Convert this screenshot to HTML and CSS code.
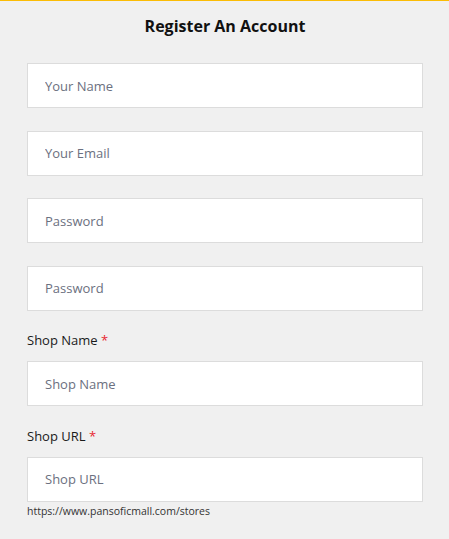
FILE: index.html
```html
<!DOCTYPE html>
<html lang="en">
<head>
<meta charset="utf-8">
<title>Register An Account</title>
<link rel="stylesheet" href="styles.css">
</head>
<body>
<main class="page">
  <h1 class="title">Register An Account</h1>
  <form class="form">
    <div class="field"><input class="input" type="text" placeholder="Your Name"></div>
    <div class="field"><input class="input" type="email" placeholder="Your Email"></div>
    <div class="field"><input class="input" type="password" placeholder="Password"></div>
    <div class="field"><input class="input" type="password" placeholder="Password"></div>
    <div class="field">
      <label class="label">Shop Name <span class="req">*</span></label>
      <input class="input" type="text" placeholder="Shop Name">
    </div>
    <div class="field">
      <label class="label">Shop URL <span class="req">*</span></label>
      <input class="input" type="text" placeholder="Shop URL">
      <p class="hint">https://www.pansoficmall.com/stores</p>
    </div>
  </form>
</main>
</body>
</html>
```

FILE: styles.css
```css
html, body {
  margin: 0;
  padding: 0;
  background: #f0f0f0;
}
body {
  border-top: 1px solid #fbbc05;
  font-family: "Open Sans", "Liberation Sans", sans-serif;
  color: #111;
  min-height: 538px;
}
.page {
  padding: 15px 26px 0 27px;
}
.title {
  margin: 0;
  font-size: 16px;
  line-height: 20px;
  font-weight: 700;
  text-align: center;
  color: #111;
}
.form {
  margin-top: 27px;
  display: flex;
  flex-direction: column;
  gap: 22.5px;
}
.field {
  display: flex;
  flex-direction: column;
}
.label {
  font-size: 13px;
  line-height: 14px;
  margin-bottom: 14px;
  color: #1a1a1a;
}
.req {
  color: #e8252f;
}
.input {
  box-sizing: border-box;
  height: 45px;
  width: 100%;
  margin: 0;
  border: 1px solid #dcdcdc;
  background: #fff;
  padding: 0 17px;
  font-family: "Open Sans", "Liberation Sans", sans-serif;
  font-size: 13px;
  color: #333;
  outline: none;
}
.input::placeholder {
  color: #6b7080;
  opacity: 1;
}
.hint {
  margin: 3px 0 0;
  font-size: 10.5px;
  line-height: 12px;
  color: #333;
}
```
